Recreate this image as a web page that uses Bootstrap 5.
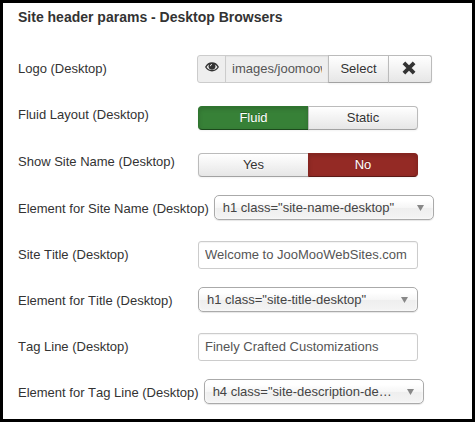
<!DOCTYPE html>
<html lang="en">
<head>
<meta charset="utf-8">
<meta name="viewport" content="width=device-width, initial-scale=1">
<title>Site header params</title>
<link href="https://cdn.jsdelivr.net/npm/bootstrap@5.3.0/dist/css/bootstrap.min.css" rel="stylesheet">
<style>
body{font:13px/18px "Liberation Sans",Arial,sans-serif;color:#333;background:#fff}
.params{height:422px;border:3px solid #000;padding:0 0 0 15px}
.params h1{font-size:14px;line-height:20px;height:43px;padding-top:4px;margin:0;font-weight:700}
.param{height:46px;white-space:nowrap}
.param>label{min-width:180px;padding-top:16px;padding-right:5px;font-kerning:none}
.param>label.up-1{padding-top:15px}
.param>label.up-2{padding-top:14px}
.ctl{margin-top:11px;width:220px}
.media{margin:9px 0 0 -1px;width:235px;height:28px;flex-wrap:nowrap}
.media .input-group-text{width:29px;padding:0 0 4px;justify-content:center;background:#eee;border-color:#ccc;border-radius:3px;color:#333}
.media .form-control{width:104px;flex:none;background:#eee}
.form-control{height:28px;padding:3px 6px 5px;font-size:13px;line-height:18px;color:#555;border:1px solid #ccc;border-radius:3px;box-shadow:inset 0 1px 1px rgba(0,0,0,.05)}
.btn-plain{--bs-btn-color:#333;--bs-btn-border-color:#bbb;padding:0;font-size:13px;line-height:18px;border-radius:3px;border-bottom-color:#a2a2a2;background:linear-gradient(#fff,#e6e6e6);text-shadow:0 1px 1px rgba(255,255,255,.75);box-shadow:inset 0 1px 0 rgba(255,255,255,.2),0 1px 2px rgba(0,0,0,.05)}
.media .btn-pick{width:61px}
.media .btn-clear{width:44px;display:flex;align-items:center;justify-content:center;padding:0 2px 2px 0}
.toggle{height:24px;margin-top:14px}
.toggle.low{margin-top:15px}
.toggle .btn{width:111px;flex:none;line-height:22px;border-radius:4px}
.toggle .btn:last-child{width:110px}
.toggle .btn-on,.toggle .btn-off{color:#fff;text-shadow:0 -1px 0 rgba(0,0,0,.25);box-shadow:inset 0 2px 4px rgba(0,0,0,.15),0 1px 2px rgba(0,0,0,.05)}
.toggle .btn-on{background:#378137;border-color:#2f752f #2f752f #1c491c}
.toggle .btn-off{background:#942a25;border-color:#862520 #862520 #5c1915}
.picker{height:25px;padding:0 9px 0 8px;border:1px solid #aaa;border-radius:5px;color:#444;line-height:23px;background:linear-gradient(#fff 20%,#f6f6f6 50%,#eee 52%,#f4f4f4 100%);box-shadow:inset 0 0 3px #fff,0 1px 1px rgba(0,0,0,.1)}
.picker svg{width:7px;height:6px;flex:none;margin-top:1px}
</style>
<script src="https://cdn.jsdelivr.net/npm/bootstrap@5.3.0/dist/js/bootstrap.bundle.min.js"></script>
</head>
<body>
<main class="params">
<h1>Site header params - Desktop Browsers</h1>
<div class="param d-flex align-items-start"><label class="up-2" for="logo">Logo (Desktop)</label>
<div class="input-group media"><span class="input-group-text"><svg width="14" height="10" viewBox="0 0 14 10"><path d="M.8 5C3.7-.4 10.3-.4 13.2 5C10.3 10 3.7 10 .8 5Z" fill="none" stroke="#333" stroke-width="1.4"/><circle cx="7" cy="4.3" r="3.4" fill="#333"/><path d="M5.3 4.2Q5.4 2.5 7 2.4" fill="none" stroke="#eee" stroke-width=".9"/></svg></span><input id="logo" class="form-control" value="images/joomoowebsites.png" readonly><button class="btn btn-plain btn-pick" type="button">Select</button><button class="btn btn-plain btn-clear" type="button" aria-label="Clear"><svg width="14" height="14" viewBox="0 0 14 14"><path d="M1.9 1.9L12.1 12.1M12.1 1.9L1.9 12.1" stroke="#333" stroke-width="3.8"/></svg></button></div></div>
<div class="param d-flex align-items-start"><label class="up-2">Fluid Layout (Desktop)</label><div class="ctl btn-group toggle"><button class="btn btn-plain btn-on" type="button">Fluid</button><button class="btn btn-plain" type="button">Static</button></div></div>
<div class="param d-flex align-items-start"><label class="up-1">Show Site Name (Desktop)</label><div class="ctl btn-group toggle low"><button class="btn btn-plain" type="button">Yes</button><button class="btn btn-plain btn-off" type="button">No</button></div></div>
<div class="param d-flex align-items-start"><label>Element for Site Name (Desktop)</label><div class="ctl picker d-flex align-items-center justify-content-between"><span>h1 class="site-name-desktop"</span><svg viewBox="0 0 7 6"><path d="M0 0H7L3.5 6Z" fill="#888"/></svg></div></div>
<div class="param d-flex align-items-start"><label for="title">Site Title (Desktop)</label><input id="title" class="form-control ctl" value="Welcome to JooMooWebSites.com"></div>
<div class="param d-flex align-items-start"><label>Element for Title (Desktop)</label><div class="ctl picker d-flex align-items-center justify-content-between"><span>h1 class="site-title-desktop"</span><svg viewBox="0 0 7 6"><path d="M0 0H7L3.5 6Z" fill="#888"/></svg></div></div>
<div class="param d-flex align-items-start"><label for="tag">Tag Line (Desktop)</label><input id="tag" class="form-control ctl" value="Finely Crafted Customizations"></div>
<div class="param d-flex align-items-start"><label>Element for Tag Line (Desktop)</label><div class="ctl picker d-flex align-items-center justify-content-between"><span>h4 class="site-description-de…</span><svg viewBox="0 0 7 6"><path d="M0 0H7L3.5 6Z" fill="#888"/></svg></div></div>
</main>
</body>
</html>
